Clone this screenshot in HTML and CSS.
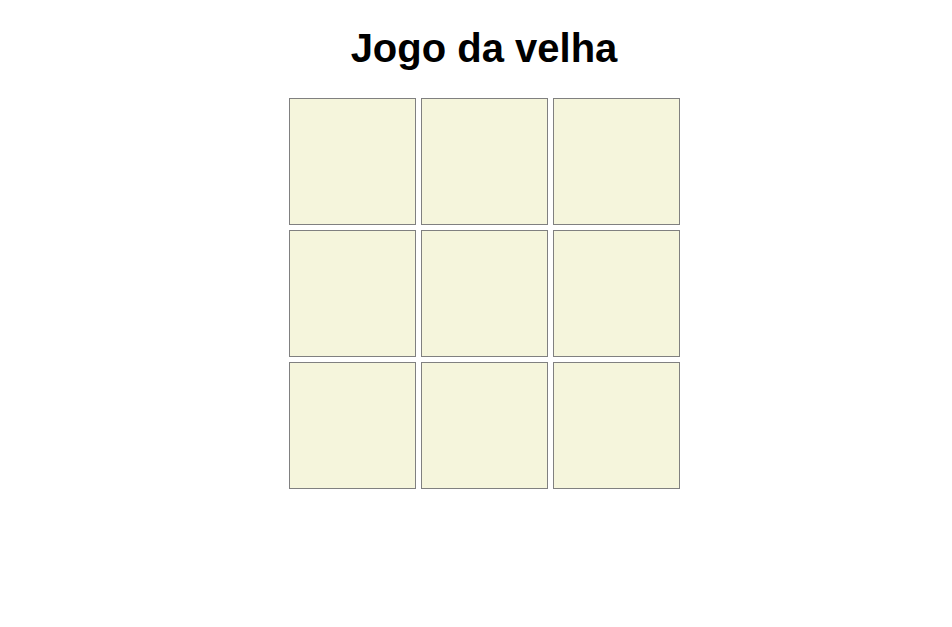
FILE: index.html
```html
<!DOCTYPE html>
<html lang="pt">
<head>
<meta charset="utf-8">
<title>Jogo da velha</title>
<link rel="stylesheet" href="styles.css">
</head>
<body>
<main class="page">
  <h1 class="title">Jogo da velha</h1>
  <div class="board">
    <div class="cell"></div>
    <div class="cell"></div>
    <div class="cell"></div>
    <div class="cell"></div>
    <div class="cell"></div>
    <div class="cell"></div>
    <div class="cell"></div>
    <div class="cell"></div>
    <div class="cell"></div>
  </div>
</main>
</body>
</html>
```
FILE: styles.css
```css
html, body {
  margin: 0;
  padding: 0;
  background: #ffffff;
}
.page {
  display: flex;
  flex-direction: column;
  align-items: center;
  padding: 25px 0 0 16px;
  font-family: "Liberation Sans", Arial, sans-serif;
}
.title {
  margin: 0 0 27px;
  font-size: 40px;
  line-height: 46px;
  font-weight: bold;
  color: #000;
}
.board {
  display: grid;
  grid-template-columns: repeat(3, 127px);
  grid-auto-rows: 127px;
  gap: 5px;
}
.cell {
  background: #f5f5dc;
  border: 1px solid #808080;
}
```
